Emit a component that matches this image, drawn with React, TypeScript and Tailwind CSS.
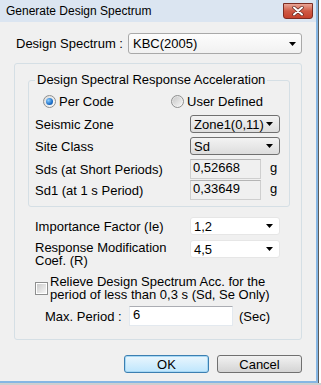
import React from 'react';

// Kleiner schwarzer Pfeil für die Auswahlfelder
function Arrow() {
  return (
    <svg width="7" height="4" viewBox="0 0 7 4" className="shrink-0">
      <path d="M0 0h7L3.5 4z" fill="#000" />
    </svg>
  );
}

function ComboList({ value, width, className }: { value: string; width: string; className: string }) {
  return (
    <div className={`${width} ${className} flex items-center justify-between pl-[3px] pr-[6px] rounded-[3px]`}>
      <span className="leading-[15px]">{value}</span>
      <Arrow />
    </div>
  );
}

function Radio({ checked, label }: { checked: boolean; label: string }) {
  return (
    <div className="flex items-center gap-[3px]">
      <div className="w-[13px] h-[13px] rounded-full border border-[#8e8f8f] bg-gradient-to-br from-[#dcdcdc] to-[#fbfbfb] flex items-center justify-center">
        {checked ? (
          <div className="w-[7px] h-[7px] rounded-full bg-[radial-gradient(circle_at_35%_35%,#8fd0ff,#1d6fc9_60%,#0d4a96)]" />
        ) : (
          <div className="w-[9px] h-[9px] rounded-full bg-gradient-to-br from-[#c9c9c9] to-[#f4f4f4]" />
        )}
      </div>
      <span className="leading-[15px]">{label}</span>
    </div>
  );
}

function ReadOnlyField({ value }: { value: string }) {
  return (
    <div className="flex items-start">
      <div className="w-[71px] h-[20px] border border-[#cfcfcf] border-t-[#b5b5b5] bg-[#f0f0f0] pl-[2px] leading-[15px]">
        {value}
      </div>
      <span className="ml-[9px] mt-[1px] leading-[15px]">g</span>
    </div>
  );
}

export default function App() {
  return (
    <div className="w-[321px] h-[385px] flex flex-col bg-[#d9d9d9] font-['Liberation_Sans',Arial,sans-serif] text-[13px] text-black overflow-hidden">
      <div className="flex h-[383px]">
        {/* Fenster */}
        <div className="w-[318px] flex flex-col border-r-2 border-b-2 border-[#86b6e3]">
          <div className="h-[22px] flex items-start justify-between pl-[6px] pr-[3px] bg-[#dbe5f1]">
            <span className="mt-[4px] text-[12px] leading-[15px]">Generate Design Spectrum</span>
            <div className="mt-[3px] w-[30px] h-[16px] rounded-b-[3px] border border-[#7d2c22] bg-gradient-to-b from-[#e9a596] via-[#cf5a45] to-[#c5412c] flex items-center justify-center">
              <svg width="12" height="10" viewBox="0 0 12 10">
                <path d="M2 1.5l8 7M10 1.5l-8 7" stroke="#5b2620" strokeWidth="3.4" strokeLinecap="round" />
                <path d="M2 1.5l8 7M10 1.5l-8 7" stroke="#fff" strokeWidth="2" strokeLinecap="round" />
              </svg>
            </div>
          </div>

          <div className="flex-1 flex flex-col bg-[#f0f0f0]">
            {/* Design Spectrum */}
            <div className="mt-[11px] h-[21px] flex items-center pl-[16px]">
              <span className="w-[112px] leading-[15px]">Design Spectrum :</span>
              <div className="w-[174px] h-[21px] flex items-center justify-between pl-[4px] pr-[5px] rounded-[3px] border border-[#a9a9a9] bg-gradient-to-b from-[#fdfdfd] to-[#f1f1f1]">
                <span className="leading-[15px]">KBC(2005)</span>
                <Arrow />
              </div>
            </div>

            {/* Äußere Gruppe */}
            <div className="mt-[9px] ml-[14px] w-[288px] border border-[#d5dfe5] rounded-[3px] pt-[8px] pb-[13px]">
              <fieldset className="ml-[13px] w-[262px] border border-[#d5dfe5] rounded-[3px] pb-[6px]">
                <legend className="ml-[6px] px-[2px] leading-[16px]">Design Spectral Response Acceleration</legend>
                <div className="mt-[5px] h-[16px] flex items-center pl-[14px]">
                  <div className="w-[128px]">
                    <Radio checked label="Per Code" />
                  </div>
                  <Radio checked={false} label="User Defined" />
                </div>
                <div className="mt-[6px] h-[18px] flex items-center pl-[6px]">
                  <span className="w-[155px] leading-[15px]">Seismic Zone</span>
                  <ComboList value="Zone1(0,11)" width="w-[90px] h-[18px]" className="border border-[#707070] bg-gradient-to-b from-[#f3f3f3] to-[#dddddd]" />
                </div>
                <div className="mt-[4px] h-[18px] flex items-center pl-[6px]">
                  <span className="w-[155px] leading-[15px]">Site Class</span>
                  <ComboList value="Sd" width="w-[90px] h-[18px]" className="border border-[#707070] bg-gradient-to-b from-[#f3f3f3] to-[#dddddd]" />
                </div>
                <div className="mt-[4px] h-[20px] flex items-center pl-[6px]">
                  <span className="w-[155px] leading-[15px]">Sds (at Short Periods)</span>
                  <ReadOnlyField value="0,52668" />
                </div>
                <div className="mt-[1px] h-[20px] flex items-center pl-[6px]">
                  <span className="w-[155px] leading-[15px]">Sd1 (at 1 s Period)</span>
                  <ReadOnlyField value="0,33649" />
                </div>
              </fieldset>

              <div className="mt-[10px] h-[18px] flex items-center pl-[20px]">
                <span className="w-[155px] leading-[15px]">Importance Factor (Ie)</span>
                <ComboList value="1,2" width="w-[90px] h-[18px]" className="border border-[#e6e6e6] bg-white" />
              </div>
              <div className="mt-[5px] flex items-start pl-[20px]">
                <span className="w-[155px] leading-[13px] pt-[1px]">
                  Response Modification
                  <br />
                  Coef. (R)
                </span>
                <ComboList value="4,5" width="w-[90px] h-[18px]" className="border border-[#e6e6e6] bg-white" />
              </div>

              <div className="mt-[8px] flex items-center pl-[20px] gap-[2px]">
                <div className="w-[13px] h-[13px] border border-[#8e8f8f] bg-white p-[1px]">
                  <div className="w-full h-full bg-gradient-to-br from-[#cbcbcb] to-[#f6f6f6]" />
                </div>
                <span className="leading-[13px]">
                  Relieve Design Spectrum Acc. for the
                  <br />
                  period of less than 0,3 s (Sd, Se Only)
                </span>
              </div>

              <div className="mt-[5px] h-[20px] flex items-center pl-[30px]">
                <span className="w-[84px] leading-[15px]">Max. Period :</span>
                <div className="w-[104px] h-[20px] border border-[#e3e9ef] border-t-[#abadb3] bg-white pl-[3px] leading-[15px]">6</div>
                <span className="ml-[6px] leading-[15px]">(Sec)</span>
              </div>
            </div>

            {/* Schaltflächen */}
            <div className="mt-[15px] flex justify-end gap-[8px] pr-[14px]">
              <button className="w-[85px] h-[18px] rounded-[3px] border border-[#3c7fb1] bg-gradient-to-b from-[#eaf6fd] to-[#bee6fd] shadow-[inset_0_0_0_1px_#a6d8f5] leading-[15px]">
                OK
              </button>
              <button className="w-[85px] h-[18px] rounded-[3px] border border-[#707070] bg-gradient-to-b from-[#f2f2f2] to-[#d4d4d4] leading-[15px]">
                Cancel
              </button>
            </div>
          </div>
        </div>
        <div className="flex-1 bg-white border-l border-[#5b5b5b]" />
      </div>
      <div className="h-[2px] bg-[#cfcfcf]" />
    </div>
  );
}
